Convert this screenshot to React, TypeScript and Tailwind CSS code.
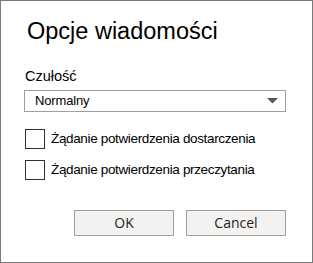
export default function App() {
  return (
    <div className="w-[313px] h-[263px] border border-[#7a7a7a] bg-white font-['Liberation_Sans',Arial,sans-serif] text-[#000]">
      <div className="pl-[26px] pt-[16px] text-[23.5px] leading-[28px]">Opcje wiadomości</div>
      <div className="px-[23px] pt-[22px]">
        <div className="text-[14.5px] leading-[18px] pl-[1px]">Czułość</div>
        <div className="mt-[5px] h-[22px] w-[262px] border border-[#a19f9d] flex items-center justify-between pl-[10px] pr-[7px]">
          <span className="text-[13px] tracking-[-0.15px]">Normalny</span>
          <svg width="11" height="6" viewBox="0 0 11 6">
            <path d="M0 0 L11 0 L5.5 5.5 Z" fill="#555" />
          </svg>
        </div>
        <div className="mt-[16px] flex flex-col gap-[10px]">
          {['Żądanie potwierdzenia dostarczenia', 'Żądanie potwierdzenia przeczytania'].map((t) => (
            <label key={t} className="flex items-center gap-[6px] pl-[1px]">
              <span className="w-[20px] h-[20px] border-[1.5px] border-[#323130] bg-white" />
              <span className="text-[13.5px] tracking-[-0.35px] pt-[1px]">{t}</span>
            </label>
          ))}
        </div>
      </div>
      <div className="mt-[29px] flex justify-end gap-[12px] pr-[26px] font-['Open_Sans',sans-serif]">
        <button className="w-[100px] h-[26px] border border-[#a19f9d] bg-[#f3f2f1] text-[14px] text-[#201f1e]">OK</button>
        <button className="w-[100px] h-[26px] border border-[#a19f9d] bg-[#f3f2f1] text-[14px] text-[#201f1e]">Cancel</button>
      </div>
    </div>
  )
}
